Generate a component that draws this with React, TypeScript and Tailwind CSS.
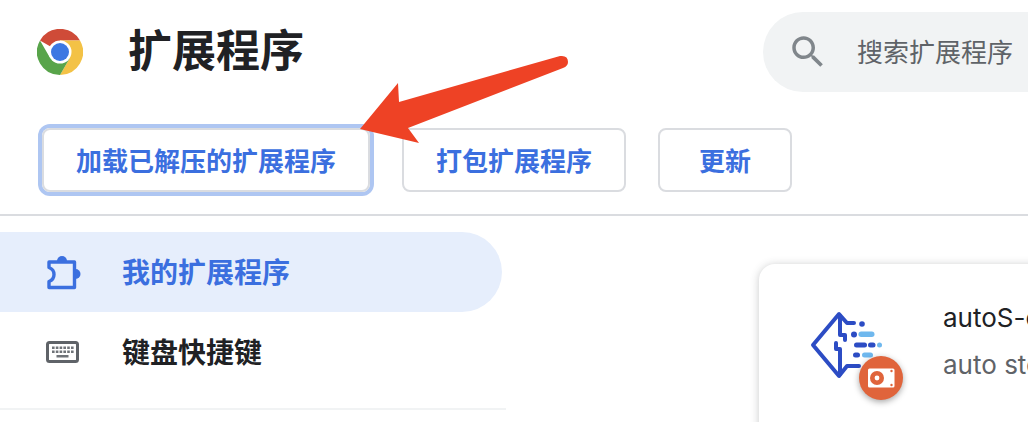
import React from "react";

const ChromeLogo = () => (
	<svg viewBox="37 29 46 46" className="w-[46px] h-[46px] shrink-0">
		<path d="M40 40.5A23 23 0 0 1 80 40.5L60 40.5L60 52Z" fill="#cf4b38" />
		<path d="M80 40.5A23 23 0 0 1 60 75L70 57.75L60 52L60 40.5Z" fill="#f3c246" />
		<path d="M60 75A23 23 0 0 1 40 40.5L50 57.75L60 52L70 57.75Z" fill="#58a44a" />
		<circle cx="60" cy="52" r="11.5" fill="#ffffff" />
		<circle cx="60" cy="52" r="9" fill="#3c78e2" />
	</svg>
);

const SearchIcon = () => (
	<svg viewBox="0 0 24 24" className="w-[42px] h-[42px] shrink-0" fill="#80868b">
		<path d="M15.5 14h-.79l-.28-.27C15.41 12.59 16 11.11 16 9.5 16 5.91 13.09 3 9.5 3S3 5.91 3 9.5 5.91 16 9.5 16c1.61 0 3.09-.59 4.23-1.57l.27.28v.79l5 4.99L20.49 19l-4.99-5zm-6 0C7.01 14 5 11.99 5 9.5S7.01 5 9.5 5 14 7.01 14 9.5 11.99 14 9.5 14z" />
	</svg>
);

const PuzzleIcon = () => (
	<svg viewBox="47 252 34 36" className="w-[34px] h-[36px] shrink-0" fill="#3b6fdf">
		<path
			d="M49 260H74.5V285.5H49V279.5C53 278 54 275 54 272.5C54 270 53 267 49 265.5Z"
			fill="none"
			stroke="#3b6fdf"
			strokeWidth="3.4"
			strokeLinejoin="round"
		/>
		<path d="M57 259A5 5 0 0 1 67 259Z" />
		<path d="M75.5 267A5 5 0 0 1 75.5 277Z" />
	</svg>
);

const KeyboardIcon = () => (
	<svg viewBox="0 0 33 22" className="w-[33px] h-[22px] shrink-0">
		<rect x="1.5" y="1.5" width="30" height="19" rx="2" fill="none" stroke="#5f6368" strokeWidth="3" />
		<path d="M6 5.5h2.6v2.6H6zM9.8 5.5h2.6v2.6H9.8zM13.6 5.5h2.6v2.6H13.6zM17.4 5.5h2.6v2.6H17.4zM21.2 5.5h2.6v2.6H21.2zM25 5.5h2.6v2.6H25zM6 9.4h2.6v2.6H6zM9.8 9.4h2.6v2.6H9.8zM13.6 9.4h2.6v2.6H13.6zM17.4 9.4h2.6v2.6H17.4zM21.2 9.4h2.6v2.6H21.2zM25 9.4h2.6v2.6H25zM10.5 14h12v2.6h-12z" fill="#6f7378" />
	</svg>
);

const ExtensionIcon = () => (
	<svg viewBox="804 305 110 96" className="w-[110px] h-[96px] shrink-0 overflow-visible">
		<g fill="none" stroke="#2c4cc4" strokeWidth="4" strokeLinecap="round" strokeLinejoin="round">
			<path d="M854 323H847L839 314L813 345L839 376L847 366H859" />
			<path d="M840 316V335H845V340" />
			<path d="M836 343V349H840V374" />
		</g>
		<circle cx="862" cy="324" r="2.8" fill="#2c4cc4" />
		<circle cx="854" cy="334.5" r="3" fill="#2c4cc4" />
		<rect x="858.5" y="331.5" width="16" height="5.5" rx="2.7" fill="#6fb8ee" />
		<rect x="854" y="342.5" width="13" height="5" rx="2.5" fill="#2c4cc4" />
		<rect x="868" y="342.5" width="7.5" height="5" rx="2.5" fill="#2c4cc4" />
		<circle cx="879.5" cy="345" r="2.5" fill="#6fb8ee" />
		<rect x="853" y="352.5" width="7" height="5" rx="2.5" fill="#2c4cc4" />
		<rect x="862" y="352.5" width="11" height="5" rx="2.5" fill="#6fb8ee" />
		<circle cx="881" cy="378" r="22" fill="#e0643b" className="drop-shadow-[0_2px_3px_rgba(0,0,0,0.35)]" />
		<rect x="868" y="368.5" width="26.5" height="19" rx="1.5" fill="#ffffff" />
		<circle cx="877" cy="378" r="7" fill="#e0643b" />
		<circle cx="877" cy="378" r="2.4" fill="#ffffff" />
		<circle cx="891.5" cy="371" r="1.2" fill="#e0643b" />
		<circle cx="891.5" cy="385" r="1.2" fill="#e0643b" />
	</svg>
);

const Arrow = () => (
	<svg viewBox="0 0 1028 422" className="absolute left-0 top-0 w-[1028px] h-[422px] pointer-events-none">
		<path
			d="M360 129L398 83L399 102L560 56Q568 55 568 62Q568 66 563 68L408 128L419 143Z"
			fill="#ee4225"
		/>
	</svg>
);

const App: React.FC = () => {
	return (
		<div className="relative w-[1028px] h-[422px] overflow-hidden bg-white text-[#202124] font-['Roboto','Noto_Sans_CJK_SC',sans-serif]">
			<div className="flex items-center h-[80px] mt-[12px] pl-[37px]">
				<ChromeLogo />
				<h1 className="ml-[45px] text-[44px] font-bold leading-none">扩展程序</h1>
				<div className="flex items-center ml-auto w-[265px] h-[80px] shrink-0 pl-[24px] rounded-l-full bg-[#f1f3f4]">
					<SearchIcon />
					<span className="ml-[28px] pt-[2px] text-[26px] text-[#5f6368] whitespace-nowrap">搜索扩展程序</span>
				</div>
			</div>

			<div className="flex gap-8 mt-[36px] pl-[42px]">
				<button className="h-[64px] px-8 pt-[4px] rounded-lg border-2 border-[#dadce0] ring-4 ring-[#aec6f2] text-[26px] font-bold text-[#3b6fdf]">
					加载已解压的扩展程序
				</button>
				<button className="h-[64px] px-8 pt-[4px] rounded-lg border-2 border-[#dadce0] text-[26px] font-bold text-[#3b6fdf]">
					打包扩展程序
				</button>
				<button className="w-[134px] h-[64px] pt-[4px] rounded-lg border-2 border-[#dadce0] text-[26px] font-bold text-[#3b6fdf]">
					更新
				</button>
			</div>

			<div className="mt-[22px] h-[2px] bg-[#dadce0]" />

			<div className="flex">
				<div className="w-[506px] shrink-0 pt-[16px]">
					<div className="flex items-center w-[502px] h-[80px] pl-[47px] rounded-r-full bg-[#e6eefc]">
						<PuzzleIcon />
						<span className="ml-[41px] pt-[4px] text-[28px] font-bold text-[#3b6fdf]">我的扩展程序</span>
					</div>
					<div className="flex items-center w-[502px] h-[80px] pl-[46px]">
						<KeyboardIcon />
						<span className="ml-[43px] pt-[4px] text-[28px] font-bold">键盘快捷键</span>
					</div>
					<div className="mt-[16px] h-[2px] bg-[#f1f3f4]" />
				</div>

				<div className="flex-1 min-w-0 pl-[253px] pt-[48px]">
					<div className="flex w-[600px] h-[300px] pl-[45px] pt-[41px] rounded-2xl bg-white shadow-[0_1px_8px_rgba(60,64,67,0.28)]">
						<ExtensionIcon />
						<div className="ml-[29px] -mt-[2px] whitespace-nowrap font-['Inter',sans-serif]">
							<div className="text-[26px] leading-[30px]">autoS-c</div>
							<div className="mt-[17px] text-[26px] leading-[30px] text-[#5f6368]">auto sto</div>
						</div>
					</div>
				</div>
			</div>

			<Arrow />
		</div>
	);
};

export default App;
